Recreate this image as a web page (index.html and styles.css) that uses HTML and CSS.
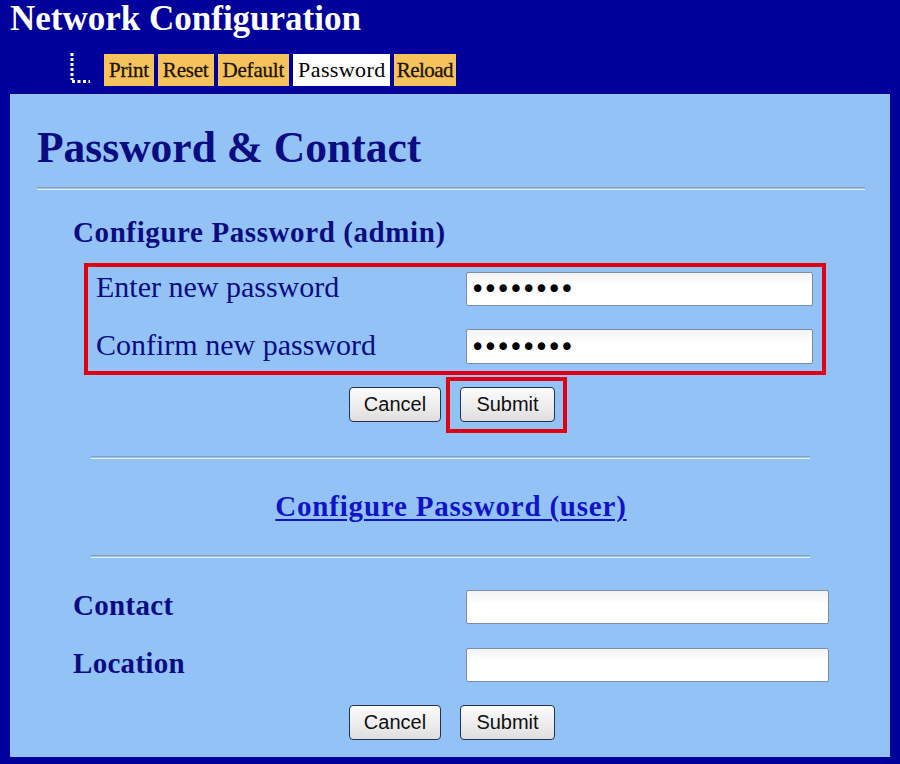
FILE: index.html
```html
<!DOCTYPE html>
<html lang="en">
<head>
<meta charset="utf-8">
<title>Network Configuration</title>
<link rel="stylesheet" href="styles.css">
</head>
<body>
<div class="page">
  <h1 class="site-title">Network Configuration</h1>
  <nav class="tabs">
    <svg class="tree" width="24" height="32" viewBox="0 0 24 32">
      <path d="M3 1 V28" stroke="#fff" stroke-width="3" stroke-dasharray="3 2" fill="none"/>
      <path d="M3 29.5 H21" stroke="#fff" stroke-width="3" stroke-dasharray="3 2.5" fill="none"/>
    </svg>
    <a class="tab">Print</a>
    <a class="tab">Reset</a>
    <a class="tab">Default</a>
    <a class="tab tab-active">Password</a>
    <a class="tab tab-last">Reload</a>
  </nav>
  <main class="panel">
    <h2 class="panel-title">Password &amp; Contact</h2>
    <hr class="rule rule-wide">
    <h3 class="section-title">Configure Password (admin)</h3>
    <div class="highlight-box">
      <label class="field-label" for="pw1">Enter new password</label>
      <input class="field-input pw" id="pw1" type="password" value="password">
      <label class="field-label" for="pw2">Confirm new password</label>
      <input class="field-input pw" id="pw2" type="password" value="password">
    </div>
    <div class="button-row">
      <button class="btn" type="button">Cancel</button>
      <span class="btn-mark"><button class="btn" type="button">Submit</button></span>
    </div>
    <hr class="rule rule-mid rule-first">
    <div class="link-row"><a class="user-link" href="#">Configure Password (user)</a></div>
    <hr class="rule rule-mid rule-second">
    <div class="contact-grid">
      <label class="bold-label" for="contact">Contact</label>
      <input class="field-input wide" id="contact" type="text">
      <label class="bold-label" for="location">Location</label>
      <input class="field-input wide" id="location" type="text">
    </div>
    <div class="button-row button-row-last">
      <button class="btn" type="button">Cancel</button>
      <button class="btn" type="button">Submit</button>
    </div>
  </main>
</div>
</body>
</html>
```

FILE: styles.css
```css
html, body {
  margin: 0;
  padding: 0;
}
body {
  background: #00009a;
  font-family: "Liberation Serif", "Times New Roman", serif;
}
.page {
  height: 764px;
  display: flex;
  flex-direction: column;
  box-sizing: border-box;
  padding-bottom: 7px;
}
.site-title {
  margin: 0;
  padding: 1px 0 0 10px;
  color: #ffffff;
  font-size: 35px;
  line-height: 36px;
  font-weight: bold;
}
.tabs {
  display: flex;
  align-items: flex-end;
  gap: 4px;
  margin-top: 17px;
  padding-left: 69px;
  height: 32px;
}
.tree {
  margin-right: 7px;
  align-self: flex-start;
  margin-top: -2px;
}
.tab {
  height: 32px;
  box-sizing: border-box;
  padding: 0 5px;
  display: flex;
  align-items: center;
  background: #f6c25c;
  color: #1a1400;
  font-size: 21px;
  text-decoration: none;
  letter-spacing: -0.2px;
  -webkit-text-stroke: 0.3px #1a1400;
}
.tab-active {
  background: #ffffff;
  color: #000000;
  font-size: 22px;
  padding: 0 4px 0 5px;
  letter-spacing: 0.4px;
  -webkit-text-stroke: 0;
}
.tab-last {
  padding: 0 3px;
  letter-spacing: -0.5px;
}
.panel {
  flex: 1;
  margin: 8px 10px 0 10px;
  background: #93c3f6;
  display: flex;
  flex-direction: column;
}
.panel-title {
  margin: 0;
  padding: 28px 0 0 27px;
  font-size: 43.5px;
  line-height: 50px;
  font-weight: bold;
  color: #0c0c82;
}
.rule {
  border: 0;
  height: 1px;
  border-top: 1px solid #8e9eb0;
  border-bottom: 1px solid #e6f1ff;
  margin: 0;
}
.rule-wide {
  margin: 15px 25px 0 27px;
}
.section-title {
  margin: 27px 0 2px 63px;
  font-size: 29px;
  line-height: 30px;
  font-weight: bold;
  color: #0c0c82;
  letter-spacing: 0.6px;
}
.highlight-box {
  margin: 14px 0 0 74px;
  width: 742px;
  box-sizing: border-box;
  border: 4px solid #e00012;
  padding: 5px 9px 7px 8px;
  display: grid;
  grid-template-columns: 370px 347px;
  row-gap: 23px;
  align-items: center;
}
.field-label {
  font-size: 30px;
  color: #0c0c82;
  line-height: 30px;
  padding-bottom: 4px;
}
.field-input {
  box-sizing: border-box;
  height: 34px;
  margin: 0;
  border: 1px solid #7d8fa8;
  border-radius: 2px;
  background: linear-gradient(#f2f2f2, #ffffff 40%);
  padding: 0 6px;
  outline: none;
}
.pw {
  width: 347px;
  font-family: "DejaVu Sans", sans-serif;
  font-size: 26px;
  letter-spacing: -2.6px;
  padding-left: 3px;
  color: #000;
}
.pw:nth-of-type(2) {
  height: 35px;
}
.button-row {
  display: flex;
  justify-content: center;
  gap: 19px;
  margin-top: 12px;
  padding-left: 4px;
}
.btn {
  box-sizing: border-box;
  height: 35px;
  width: 92px;
  margin: 0;
  padding: 0;
  border: 1px solid #24324e;
  border-radius: 4px;
  background: linear-gradient(#fbfbfb, #ebebeb 60%, #dedede);
  font-family: "Liberation Sans", Arial, sans-serif;
  font-size: 20px;
  color: #111;
}
.btn-mark {
  position: relative;
  display: flex;
}
.btn-mark .btn {
  width: 95px;
}
.btn-mark::after {
  content: "";
  position: absolute;
  top: -10px;
  left: -14px;
  right: -12px;
  bottom: -11px;
  border: 4px solid #e00012;
  pointer-events: none;
}
.button-row .btn:last-child,
.button-row-last .btn:last-child {
  width: 95px;
}
.rule-mid {
  width: 719px;
  align-self: center;
}
.rule-first {
  margin-top: 34px;
}
.link-row {
  text-align: center;
  margin-top: 31px;
  padding-left: 2px;
}
.user-link {
  font-size: 29px;
  line-height: 32px;
  font-weight: bold;
  color: #1212c8;
  letter-spacing: 0.8px;
  text-decoration: underline;
  text-decoration-thickness: 2px;
  text-underline-offset: 3px;
}
.rule-second {
  margin-top: 33px;
}
.contact-grid {
  margin: 32px 0 0 63px;
  display: grid;
  grid-template-columns: 393px 363px;
  row-gap: 24px;
  align-items: center;
}
.bold-label {
  font-size: 29px;
  font-weight: bold;
  line-height: 30px;
  color: #0c0c82;
  padding-bottom: 4px;
  letter-spacing: 0.3px;
}
.wide {
  width: 363px;
  height: 34px;
}
.button-row-last {
  margin-top: 23px;
}
```
